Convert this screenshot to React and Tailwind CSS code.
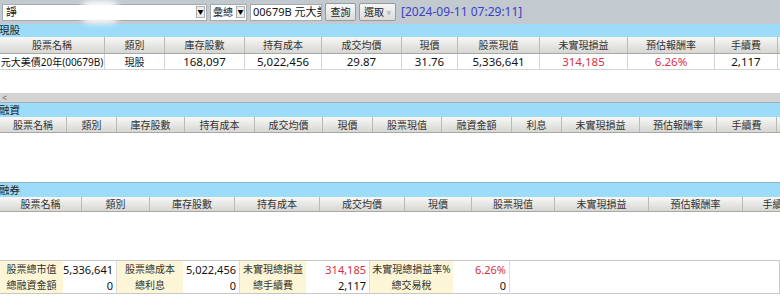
import React from "react";

const FONT = { fontFamily: '"Noto Sans", "Noto Sans CJK TC", sans-serif' };

const stockCols = [
  ["股票名稱", 105], ["類別", 60], ["庫存股數", 80], ["持有成本", 77], ["成交均價", 80],
  ["現價", 56], ["股票現值", 82], ["未實現損益", 88], ["預估報酬率", 87], ["手續費", 63],
];

const stockRow = [
  "元大美債20年(00679B)", "現股", "168,097", "5,022,456", "29.87",
  "31.76", "5,336,641", "314,185", "6.26%", "2,117",
];

const marginCols = [
  ["股票名稱", 67], ["類別", 50], ["庫存股數", 68], ["持有成本", 70], ["成交均價", 68], ["現價", 50],
  ["股票現值", 69], ["融資金額", 70], ["利息", 50], ["未實現損益", 78], ["預估報酬率", 77], ["手續費", 60],
];

const shortCols = [
  ["股票名稱", 82], ["類別", 68], ["庫存股數", 85], ["持有成本", 85], ["成交均價", 85],
  ["現價", 67], ["股票現值", 83], ["未實現損益", 94], ["預估報酬率", 94], ["手續費", 70],
];

function SectionBar({ title, h = "h-[14px]" }) {
  return (
    <div className={`${h} bg-[#9ddcf9] flex items-center text-[10.5px] leading-none text-[#222] -indent-[1px]`}>
      {title}
    </div>
  );
}

function HeaderRow({ cols, h = "h-[16px]" }) {
  return (
    <div className={`flex ${h} bg-gradient-to-b from-[#f8f8f6] to-[#d6d6d3] border-b border-[#a8a8a8] overflow-hidden`}>
      {cols.map(([label, w], i) => (
        <div
          key={i}
          className="shrink-0 flex items-center justify-center border-r border-[#b9b9b6] text-[10px] text-[#333] leading-none whitespace-nowrap"
          style={{ width: w }}
        >
          {label}
        </div>
      ))}
    </div>
  );
}

function Arrow() {
  return (
    <span className="w-[9px] h-[12px] bg-[#ececec] border border-[#b0b0b0] flex items-center justify-center text-[6px] text-black leading-none">
      ▼
    </span>
  );
}

function Toolbar() {
  return (
    <div className="relative h-[24px] bg-[#c2cacf] flex items-center pl-[2px] gap-[3px] text-[11px]">
      <div className="w-[205px] h-[17px] bg-white border border-[#a4abb0] flex items-center justify-between pl-[3px] pr-[1px]">
        <span className="text-[#222]">諍</span>
        <Arrow />
      </div>
      <div className="w-[37px] h-[17px] bg-white border border-[#a4abb0] flex items-center justify-between pl-[2px] pr-[1px]">
        <span className="text-[#222] text-[10px]">彙總</span>
        <Arrow />
      </div>
      <div className="w-[72px] h-[17px] bg-white border border-[#a4abb0] flex items-center pl-[2px] overflow-hidden whitespace-nowrap text-[#111]">
        00679B 元大美
      </div>
      <button className="w-[31px] h-[18px] bg-gradient-to-b from-[#f7f7f7] to-[#dcdcdc] border border-[#9a9a9a] rounded-[2px] text-[10px] text-[#222] leading-none">
        查詢
      </button>
      <button className="w-[37px] h-[18px] bg-gradient-to-b from-[#f7f7f7] to-[#dcdcdc] border border-[#9a9a9a] rounded-[2px] text-[10px] text-[#222] leading-none flex items-center justify-center gap-[3px]">
        選取<span className="text-[7px] text-[#555]">▿</span>
      </button>
      <span className="ml-[2px] text-[12px] text-[#3b3fc8]">[2024-09-11 07:29:11]</span>
      <div className="absolute left-[80px] top-[1px] w-[40px] h-[22px] rounded-full bg-white blur-[3px]" />
    </div>
  );
}

export default function App() {
  return (
    <div className="w-[780px] h-[300px] bg-white overflow-hidden" style={FONT}>
      <Toolbar />

      {/* 現股 */}
      <SectionBar title="現股" h="h-[13px]" />
      <HeaderRow cols={stockCols} h="h-[17px]" />
      <div className="flex h-[16px] border-b border-[#d4d4d4]">
        {stockCols.map(([, w], i) => (
          <div
            key={i}
            className={`shrink-0 flex items-center justify-center border-r border-[#d4d4d4] leading-none whitespace-nowrap ${
              i < 2 ? "text-[10px]" : "text-[11.5px]"
            } ${i === 7 || i === 8 ? "text-[#d8303f]" : "text-[#111]"}`}
            style={{ width: w }}
          >
            {stockRow[i]}
          </div>
        ))}
      </div>

      <div className="h-[23px]" />
      <div className="h-[10px] bg-[#d4d4d4] border-b border-[#9fb0ba] flex items-center pl-[2px] text-[9px] leading-none text-[#666]">
        &lt;
      </div>

      {/* 融資 */}
      <SectionBar title="融資" />
      <HeaderRow cols={marginCols} />
      <div className="h-[49px]" />

      {/* 融券 */}
      <div className="border-t border-[#8fb8cc]">
        <SectionBar title="融券" />
      </div>
      <HeaderRow cols={shortCols} h="h-[15px]" />
      <div className="h-[48px]" />

      {/* 合計 */}
      <div className="border-y border-[#c8c8c8] leading-none">
        {[
          [["股票總市值", 63], ["5,336,641", 54], ["股票總成本", 66], ["5,022,456", 57], ["未實現總損益", 66], ["314,185", 64, true], ["未實現總損益率%", 83], ["6.26%", 57, true]],
          [["總融資金額", 63], ["0", 54], ["總利息", 66], ["0", 57], ["總手續費", 66], ["2,117", 64], ["總交易稅", 83], ["0", 57]],
        ].map((row, r) => (
          <div key={r} className="flex h-[16px]">
            {row.map(([text, w, red], i) =>
              i % 2 === 0 ? (
                <div
                  key={i}
                  className="shrink-0 bg-[#fdf6d6] flex items-center justify-center text-[10px] text-[#333] whitespace-nowrap"
                  style={{ width: w }}
                >
                  {text}
                </div>
              ) : (
                <div
                  key={i}
                  className={`shrink-0 flex items-center justify-end pr-[3px] text-[11px] whitespace-nowrap border-r border-[#dcdcdc] ${red ? "text-[#d8303f]" : "text-[#111]"}`}
                  style={{ width: w }}
                >
                  {text}
                </div>
              )
            )}
            <div className="flex-1 border-r border-[#c8c8c8]" />
          </div>
        ))}
      </div>
    </div>
  );
}
